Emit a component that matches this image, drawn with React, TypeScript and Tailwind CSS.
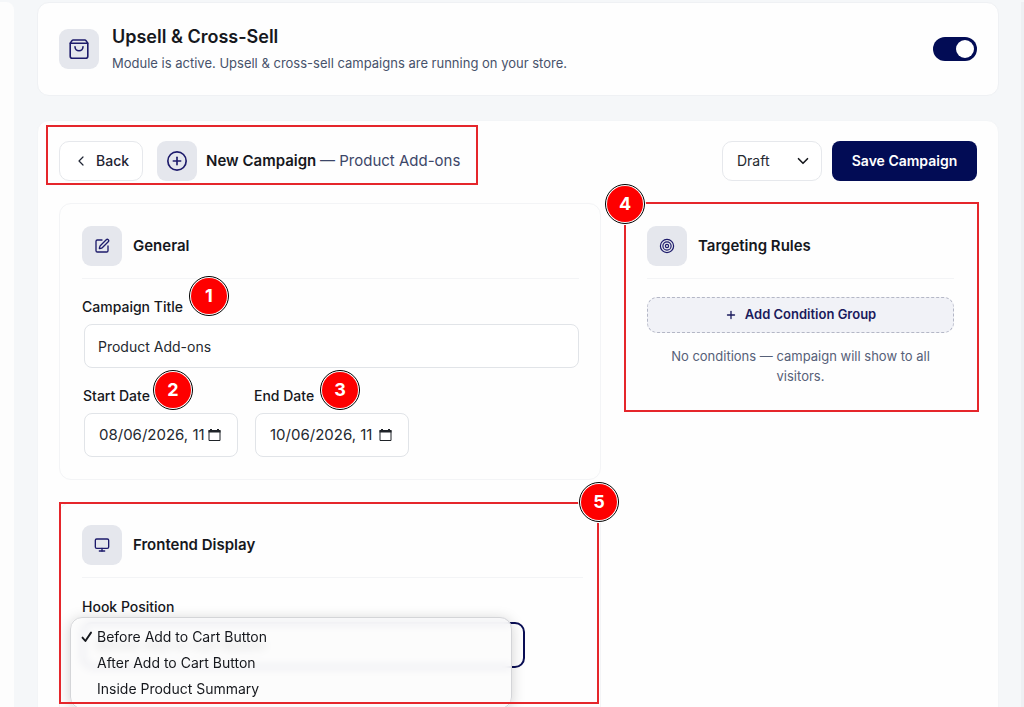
import type { ReactNode } from "react";
import { ChevronDown, ChevronLeft, CirclePlus, Monitor, Plus, SquarePen } from "lucide-react";

const hookPositions = ["Before Add to Cart Button", "After Add to Cart Button", "Inside Product Summary"];

function IconTile({ children }: { children: ReactNode }) {
  return (
    <span className="flex size-10 shrink-0 items-center justify-center rounded-[9px] bg-[#e5e7ed] text-[#1d1b6b]">
      {children}
    </span>
  );
}

function BagIcon() {
  return (
    <svg
      viewBox="0 0 22 22"
      className="size-[22px]"
      fill="none"
      stroke="currentColor"
      strokeWidth="1.6"
      strokeLinecap="round"
      strokeLinejoin="round"
      aria-hidden="true"
    >
      <path d="M2.200 5.200 4 2.600a1.400 1.400 0 0 1 1.200-.6h11.600a1.400 1.400 0 0 1 1.200.6l1.800 2.600v13a2 2 0 0 1-2 2H4.200a2 2 0 0 1-2-2Z" />
      <path d="M2.400 5.200h17.200" />
      <path d="M15 8.800a4 4 0 0 1-8 0" />
    </svg>
  );
}

function TargetIcon() {
  return (
    <svg viewBox="0 0 16 16" className="size-4" fill="none" stroke="currentColor" strokeWidth="1.2" aria-hidden="true">
      <circle cx="8" cy="8" r="6.6" />
      <circle cx="8" cy="8" r="4.1" />
      <circle cx="8" cy="8" r="1.6" />
    </svg>
  );
}

function CheckIcon() {
  return (
    <svg viewBox="0 0 12 12" className="size-3" fill="none" stroke="currentColor" strokeWidth="1.9" aria-hidden="true">
      <path d="M1.5 6.6 4.4 10 10 1.6" strokeLinecap="round" strokeLinejoin="round" />
    </svg>
  );
}

function CalendarIcon() {
  return (
    <svg viewBox="0 0 13 13" className="size-[13px] shrink-0" aria-hidden="true">
      <path d="M1 1.5h11v10H1z" fill="none" stroke="#1f2328" strokeWidth="1" />
      <path d="M.5 1h12v2.500H.5zM2 0h2v2H2zM9 0h2v2H9z" fill="#1f2328" />
    </svg>
  );
}

function Marker({ n, className }: { n: number; className: string }) {
  return (
    <span
      className={`absolute z-20 flex size-10 items-center justify-center rounded-full border border-black bg-white p-px shadow-[0_0_0_1px_#fff] ${className}`}
    >
      <span className="flex size-full items-center justify-center rounded-full bg-[#fe0000] text-lg font-bold text-white">
        {n}
      </span>
    </span>
  );
}

function Outline({ className }: { className: string }) {
  return <span className={`pointer-events-none absolute z-10 border-2 border-[#e5262b] ${className}`} />;
}

function CardHeader({ icon, title }: { icon: ReactNode; title: string }) {
  return (
    <div className="flex items-center gap-[11px] border-b border-[#f3f4f6] pb-3">
      <IconTile>{icon}</IconTile>
      <h3 className="text-[15px] font-semibold">{title}</h3>
    </div>
  );
}

type DateFieldProps = { id: string; label: string; value: string; marker: ReactNode };

function DateField({ id, label, value, marker }: DateFieldProps) {
  return (
    <div className="w-[155px]">
      <div className="relative w-fit">
        <label htmlFor={id} className="block text-sm leading-5 font-medium">
          {label}
        </label>
        {marker}
      </div>
      <div className="mt-[7px] ml-px flex h-11 items-center rounded-lg border border-[#e1e4e8] bg-white pr-4 pl-[14px]">
        <input id={id} defaultValue={value} className="min-w-0 flex-1 text-[15px] text-[#24292f] outline-none" />
        <CalendarIcon />
      </div>
    </div>
  );
}

export default function App() {
  return (
    <div className="flex h-screen overflow-hidden bg-[#f5f7f9] pt-0.5 font-['Inter',sans-serif] text-[#16181d]">
      <aside className="w-[14px] shrink-0 rounded-tr-lg bg-[#fdfdfd]" />
      <main className="min-w-0 flex-1 pr-[22px] pl-[23px]">
        <section className="flex h-[94px] items-center gap-[13px] rounded-xl border border-[#eff1f4] bg-[#fefefe] px-[21px]">
          <IconTile>
            <BagIcon />
          </IconTile>
          <div className="flex-1">
            <h1 className="text-lg leading-6 font-semibold">Upsell &amp; Cross-Sell</h1>
            <p className="mt-1 text-[13px] leading-5 text-[#47526b]">
              Module is active. Upsell &amp; cross-sell campaigns are running on your store.
            </p>
          </div>
          <label className="relative h-6 w-11 shrink-0">
            <input
              type="checkbox"
              defaultChecked
              aria-label="Upsell & Cross-Sell module"
              className="peer block size-full appearance-none rounded-full bg-[#c9cdd6] checked:bg-[#020c55]"
            />
            <span className="absolute top-[3px] left-[3px] size-[18px] rounded-full bg-white peer-checked:left-[23px]" />
          </label>
        </section>

        <section className="mt-6 rounded-xl border border-[#f3f5f7] bg-[#fefefe] px-[21px] pt-5 pb-6">
          <div className="flex h-10 items-center gap-[10px]">
            <div className="relative flex items-center">
              <Outline className="-top-4 -right-[18px] -bottom-1 -left-[13px]" />
              <button className="flex h-10 items-center gap-[7px] rounded-[10px] border border-[#e6e8ec] bg-white px-[13px] text-sm font-medium text-[#1f2433]">
                <ChevronLeft className="size-4" strokeWidth={1.8} />
                Back
              </button>
              <div className="ml-[14px] flex items-center gap-[9px]">
                <IconTile>
                  <CirclePlus className="size-[22px]" strokeWidth={1.8} />
                </IconTile>
                <h2 className="text-[15px] font-semibold whitespace-nowrap">
                  New Campaign <span className="font-normal text-[#3c4668]">— Product Add-ons</span>
                </h2>
              </div>
            </div>
            <div className="relative ml-auto">
              <select
                aria-label="Status"
                className="block h-10 w-[100px] appearance-none rounded-[10px] border border-[#e6e8ec] bg-white pl-[14px] text-sm text-[#24292f]"
              >
                <option>Draft</option>
                <option>Active</option>
              </select>
              <ChevronDown className="pointer-events-none absolute top-[11px] right-[10px] size-[18px]" strokeWidth={2.2} />
            </div>
            <button className="h-10 w-[145px] rounded-lg bg-[#020c55] text-sm font-semibold text-white">
              Save Campaign
            </button>
          </div>

          <div className="mt-[22px] grid grid-cols-[minmax(0,1fr)_353px] items-start gap-[23px]">
            <div>
              <section className="rounded-xl border border-[#f3f4f6] py-[22px] pr-[21px] pl-[22px]">
                <CardHeader icon={<SquarePen className="size-4" strokeWidth={2} />} title="General" />
                <div className="relative mt-[18px] w-fit">
                  <label htmlFor="title" className="block text-sm leading-5 font-medium">
                    Campaign Title
                  </label>
                  <Marker n={1} className="-top-[21px] left-[107px]" />
                </div>
                <div className="mt-[7px] pl-[2px]">
                  <input
                    id="title"
                    defaultValue="Product Add-ons"
                    className="block h-11 w-full rounded-lg border border-[#e1e4e8] bg-white px-[13px] text-sm text-[#24292f] outline-none"
                  />
                </div>
                <div className="mt-[18px] flex gap-4 pl-px">
                  <DateField
                    id="start"
                    label="Start Date"
                    value="08/06/2026, 11"
                    marker={<Marker n={2} className="-top-4 left-[70px]" />}
                  />
                  <DateField
                    id="end"
                    label="End Date"
                    value="10/06/2026, 11"
                    marker={<Marker n={3} className="-top-4 left-[66px]" />}
                  />
                </div>
              </section>

              <section className="relative mt-[22px] h-[260px] rounded-xl border border-[#f3f4f6] pt-[22px] pr-[17px] pl-[22px]">
                <Outline className="-top-px right-px -left-px h-[202px]" />
                <Marker n={5} className="-top-[21px] -right-[19px]" />
                <CardHeader icon={<Monitor className="size-4" strokeWidth={2} />} title="Frontend Display" />
                <label htmlFor="hook" className="mt-[19px] block text-sm leading-5 font-medium">
                  Hook Position
                </label>
                <div className="relative mt-[5px] w-[443px]">
                  <select
                    id="hook"
                    className="block h-[46px] w-full appearance-none rounded-[10px] border-2 border-[#0b0f55] bg-white px-3 text-sm"
                  >
                    {hookPositions.map((name) => (
                      <option key={name}>{name}</option>
                    ))}
                  </select>
                  <ul className="absolute -top-[5px] right-[13px] -left-3 h-[92px] rounded-xl border border-[#d4d5d8] bg-[#fcfcfc]/85 pt-[6px] text-sm shadow-[0_2px_14px_rgba(0,0,0,0.18)] backdrop-blur-[4px]">
                    {hookPositions.map((name, i) => (
                      <li key={name} className="flex h-[26px] items-center pl-[10px]">
                        <span className="w-4">{i === 0 && <CheckIcon />}</span>
                        {name}
                      </li>
                    ))}
                  </ul>
                </div>
              </section>
            </div>

            <section className="relative px-[23px] pt-[23px] pb-[26px]">
              <Outline className="-top-px -right-[2px] bottom-0 left-0" />
              <Marker n={4} className="-top-[19px] -left-[19px]" />
              <CardHeader icon={<TargetIcon />} title="Targeting Rules" />
              <button className="mt-[18px] flex h-9 w-full items-center justify-center gap-2 rounded-[10px] border border-dashed border-[#b4b7c6] bg-[#f1f2f7] text-[13px] font-semibold text-[#1a1a5c]">
                <Plus className="size-3" strokeWidth={2.6} />
                Add Condition Group
              </button>
              <p className="mt-[13px] px-3 text-center text-[13px] leading-5 text-[#566078]">
                No conditions — campaign will show to all visitors.
              </p>
            </section>
          </div>
        </section>
      </main>
      <div className="w-[3px] shrink-0 bg-[#eef0f3]" />
    </div>
  );
}
